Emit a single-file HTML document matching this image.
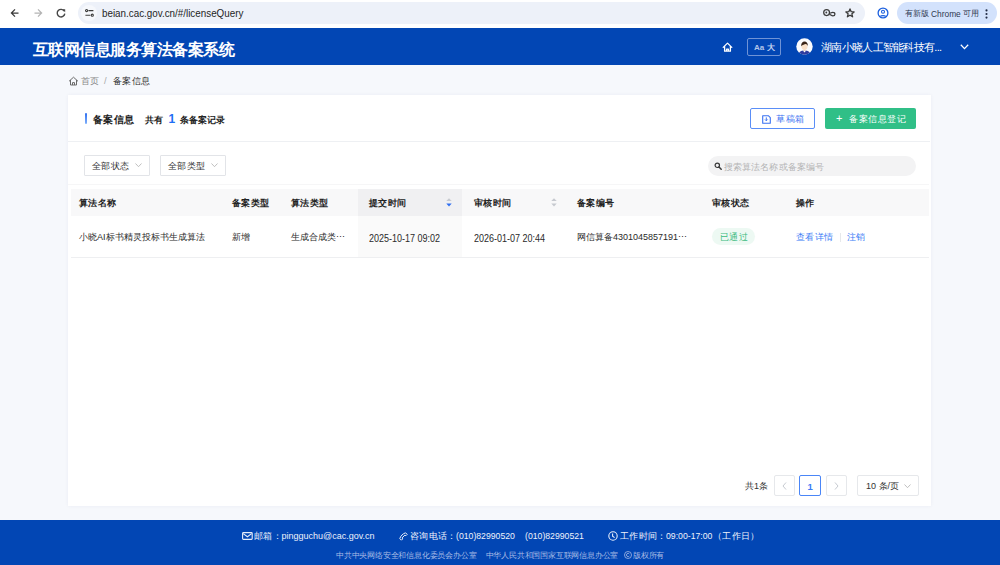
<!DOCTYPE html>
<html><head><meta charset="utf-8">
<style>
*{box-sizing:border-box;margin:0;padding:0}
html,body{width:1000px;height:565px;overflow:hidden;background:#f6f8fc;font-family:"Liberation Sans",sans-serif;color:#333}
.t{position:absolute;white-space:nowrap;line-height:1}
svg{position:absolute;overflow:visible}
.box{position:absolute}
#tb{position:absolute;left:0;top:0;width:1000px;height:28px;background:#fff}
#omni{position:absolute;left:78px;top:2px;width:787px;height:22px;border-radius:11px;background:#edf1f9}
#upd{position:absolute;left:897px;top:2px;width:100px;height:22px;border-radius:11px;background:#d3e2fc}
#hd{position:absolute;left:0;top:28px;width:1000px;height:37px;background:#0246b4}
#card{position:absolute;left:68px;top:95px;width:863px;height:411px;background:#fff;box-shadow:0 0 4px rgba(20,40,90,0.05)}
#ft{position:absolute;left:0;top:520px;width:1000px;height:45px;background:#0246b4}
.th{font-size:9px;letter-spacing:0.3px;font-weight:bold;color:#222}
.f1{top:12px;font-size:9px;letter-spacing:0.3px;color:#f0f4fc;font-weight:500}
.f1l{top:12px;font-size:9px;color:#eef2fb}
.f2{top:32px;font-size:8px;letter-spacing:-0.2px;color:#a9bde6}
.td{font-size:9px;color:#2a2a2a;font-weight:500}
</style></head><body>
<div id="tb">
  <!-- back -->
  <svg width="10" height="10" style="left:10px;top:8px" viewBox="0 0 10 10"><path d="M8.5 5H2M5 1.4L1.4 5L5 8.6" fill="none" stroke="#3a3a3a" stroke-width="1.25"/></svg>
  <!-- forward -->
  <svg width="10" height="10" style="left:33px;top:8px" viewBox="0 0 10 10"><path d="M1.5 5H8M5 1.4L8.6 5L5 8.6" fill="none" stroke="#b4b4b4" stroke-width="1.25"/></svg>
  <!-- reload -->
  <svg width="10" height="10" style="left:56px;top:8px" viewBox="0 0 10 10"><path d="M8.3 3.2A3.8 3.8 0 1 0 8.8 5.6" fill="none" stroke="#474747" stroke-width="1.4"/><path d="M6.2 1.2L9.2 1.2L9.2 4.2Z" fill="#474747"/></svg>
  <div id="omni"></div>
  <div class="box" style="left:81px;top:5px;width:16px;height:16px;border-radius:8px;background:#f6f8fc"></div>
  <svg width="9" height="8" style="left:85px;top:9px" viewBox="0 0 9 8"><circle cx="1.6" cy="1.6" r="1.05" fill="none" stroke="#3c3c3c" stroke-width="1.1"/><path d="M3.4 1.6H8.4M0.4 6.2H5.4" stroke="#3c3c3c" stroke-width="1.1"/><circle cx="7.3" cy="6.2" r="1.05" fill="none" stroke="#3c3c3c" stroke-width="1.1"/></svg>
  <div class="t" style="left:102px;top:8px;font-size:11.5px;color:#1f1f1f;transform:scaleX(0.855);transform-origin:0 0">beian.cac.gov.cn/#/licenseQuery</div>
  <!-- key -->
  <svg width="13" height="8" style="left:823px;top:9px" viewBox="0 0 13 8"><circle cx="3.6" cy="3.6" r="2.9" fill="none" stroke="#3c3c3c" stroke-width="1.25"/><circle cx="3.3" cy="3.5" r="0.9" fill="#3c3c3c"/><path d="M6.4 4.4C7.4 4.2 8.4 3.4 9.8 3.4C11 3.4 11.9 4.3 11.9 5.2C11.9 6.2 11 6.8 9.9 6.8C8.6 6.8 7.6 5.6 6.4 5.3" fill="none" stroke="#3c3c3c" stroke-width="1.25"/></svg>
  <!-- star -->
  <svg width="10" height="10" style="left:845.3px;top:8.3px" viewBox="0 0 10 10"><path d="M5 0.9L6.2 3.7L9.1 3.9L6.9 5.8L7.6 8.8L5 7.2L2.4 8.8L3.1 5.8L0.9 3.9L3.8 3.7Z" fill="none" stroke="#3a3a3a" stroke-width="1.3" stroke-linejoin="round"/></svg>
  <!-- profile -->
  <svg width="12" height="12" style="left:877px;top:7px" viewBox="0 0 12 12"><circle cx="6" cy="6" r="4.9" fill="none" stroke="#1b5fde" stroke-width="1.3"/><circle cx="6" cy="4.8" r="1.5" fill="none" stroke="#1b5fde" stroke-width="1.1"/><path d="M3.3 9.4C4.2 8.3 7.8 8.3 8.7 9.4" fill="none" stroke="#1b5fde" stroke-width="1.2"/></svg>
  <div id="upd"></div>
  <div class="t" style="left:904.5px;top:9.5px;font-size:8px;font-weight:500;color:#2e3850">有新版</div><div class="t" style="left:930.5px;top:9.5px;font-size:8.5px;color:#2e3850;font-weight:normal;transform:scaleX(0.985);transform-origin:0 0">Chrome</div><div class="t" style="left:962.5px;top:9.5px;font-size:8px;font-weight:500;color:#2e3850">可用</div>
  <svg width="3" height="10" style="left:985px;top:8.5px" viewBox="0 0 3 10"><circle cx="1.5" cy="1.4" r="1.05" fill="#1f2a44"/><circle cx="1.5" cy="5" r="1.05" fill="#1f2a44"/><circle cx="1.5" cy="8.6" r="1.05" fill="#1f2a44"/></svg>
</div>
<div id="hd">
  <div class="t" style="left:32.5px;top:13.5px;font-size:16px;letter-spacing:-0.5px;font-weight:bold;color:#fff">互联网信息服务算法备案系统</div>
  <!-- home -->
  <svg width="11" height="10" style="left:722px;top:14px" viewBox="0 0 11 10"><path d="M1.2 5.4L5.5 1.1L9.8 5.4M2.6 4.2V9.2H8.4V4.2M4.6 9.2V7.2H6.4V9.2" fill="none" stroke="#fff" stroke-width="1.3" stroke-linejoin="round" stroke-linecap="round"/></svg>
  <div class="box" style="left:747px;top:10px;width:34px;height:18px;border:1px solid #6f93d6;border-radius:2px"></div>
  <div class="t" style="left:754px;top:16px;font-size:8px;font-weight:bold;color:#b3c5ea">Aa</div>
  <div class="t" style="left:767px;top:15.5px;font-size:8px;font-weight:bold;color:#c9d6f2">大</div>
  <!-- avatar -->
  <svg width="17" height="17" style="left:796px;top:10px" viewBox="0 0 17 17"><defs><clipPath id="cc"><circle cx="8.5" cy="8.5" r="8.2"/></clipPath></defs><circle cx="8.5" cy="8.5" r="8.2" fill="#fbfbfd"/><g clip-path="url(#cc)"><path d="M2.5 17C3 13.5 5 12.5 8.5 12.5C12 12.5 14 13.5 14.5 17Z" fill="#2f3c9e"/><path d="M6.8 12.6L8.5 14.6L10.2 12.6Z" fill="#fff"/><rect x="7.6" y="10.8" width="1.8" height="2" fill="#f6d2b4"/><ellipse cx="8.5" cy="8.6" rx="3" ry="3.3" fill="#fbe1c9"/><path d="M5.2 8.2C5 5.2 6.6 3.6 8.5 3.6C10.6 3.6 12 5.2 11.8 8C11.2 6.6 10.6 6 9.6 5.9C8.6 6.4 6.6 6.5 5.2 8.2Z" fill="#3a2418"/></g></svg>
  <div class="t" style="left:821px;top:14px;font-size:11px;letter-spacing:-0.7px;font-weight:500;color:#fff">湖南小晓人工智能科技有...</div>
  <svg width="9" height="6" style="left:960px;top:16px" viewBox="0 0 9 6"><path d="M0.8 0.8L4.5 4.6L8.2 0.8" fill="none" stroke="#fff" stroke-width="1.3"/></svg>
</div>
<!-- breadcrumb -->
<svg width="11" height="10" style="left:68px;top:76px" viewBox="0 0 11 10"><path d="M1 5.3L5.5 1.2L10 5.3M2.5 4V9H8.5V4M4.5 9V6.6H6.5V9" fill="none" stroke="#6a6a6a" stroke-width="1" stroke-linejoin="miter"/></svg>
<div class="t" style="left:81px;top:77px;font-size:9px;letter-spacing:0.3px;color:#888">首页</div>
<div class="t" style="left:104px;top:76px;font-size:9.5px;color:#aaa">/</div>
<div class="t" style="left:113px;top:77px;font-size:9px;letter-spacing:0.3px;font-weight:500;color:#2a2a2a">备案信息</div>

<div id="card">
  <!-- title row -->
  <div class="box" style="left:17px;top:18px;width:2px;height:11px;border-radius:1px;background:linear-gradient(#2f6ff0,#7fb0fb)"></div>
  <div class="t" style="left:25px;top:19.5px;font-size:10px;letter-spacing:0.3px;font-weight:bold;color:#1f1f1f">备案信息</div>
  <div class="t" style="left:77px;top:20.5px;font-size:9px;font-weight:bold;color:#222">共有</div>
  <div class="t" style="left:100.5px;top:17.5px;font-size:12px;font-weight:bold;color:#1f6ff5">1</div>
  <div class="t" style="left:112px;top:20.5px;font-size:9px;font-weight:bold;color:#222">条备案记录</div>
  <!-- draft button -->
  <div class="box" style="left:682px;top:13px;width:65px;height:21px;border:1px solid #5a8ef7;border-radius:2px;background:#fff"></div>
  <svg width="9" height="9" style="left:693.5px;top:19.5px" viewBox="0 0 9 9"><path d="M0.7 0.7H6.3L8.3 2.7V8.3H0.7Z" fill="none" stroke="#3a72f2" stroke-width="1.1" stroke-linejoin="round"/><path d="M4.3 2.4V5.6M3 4.5L4.3 5.8L5.6 4.5" fill="none" stroke="#3a72f2" stroke-width="1"/></svg>
  <div class="t" style="left:708px;top:20px;font-size:9px;letter-spacing:0.7px;font-weight:500;color:#3a70f2">草稿箱</div>
  <!-- register button -->
  <div class="box" style="left:757px;top:13px;width:91px;height:21px;border-radius:2px;background:#30bf87"></div>
  <div class="t" style="left:768px;top:18px;font-size:11px;color:#fff">+</div>
  <div class="t" style="left:781px;top:20px;font-size:9px;letter-spacing:0.5px;font-weight:500;color:#fff">备案信息登记</div>
  <div class="box" style="left:0;top:46px;width:862px;height:1px;background:#eef0f3"></div>
  <!-- filters -->
  <div class="box" style="left:16px;top:60px;width:66px;height:21px;border:1px solid #e2e4e8;border-radius:1px"></div>
  <div class="t" style="left:24px;top:67px;font-size:9px;letter-spacing:0.33px;font-weight:500;color:#333">全部状态</div>
  <svg width="7" height="4" style="left:67px;top:68px" viewBox="0 0 7 4"><path d="M0.5 0.5L3.5 3.7L6.5 0.5" fill="none" stroke="#b8b8b8" stroke-width="0.9"/></svg>
  <div class="box" style="left:92px;top:60px;width:66px;height:21px;border:1px solid #e2e4e8;border-radius:1px"></div>
  <div class="t" style="left:100px;top:67px;font-size:9px;letter-spacing:0.33px;font-weight:500;color:#333">全部类型</div>
  <svg width="7" height="4" style="left:143px;top:68px" viewBox="0 0 7 4"><path d="M0.5 0.5L3.5 3.7L6.5 0.5" fill="none" stroke="#b8b8b8" stroke-width="0.9"/></svg>
  <div class="box" style="left:640px;top:60.5px;width:208px;height:20.5px;border-radius:10px;background:#f3f3f4"></div>
  <svg width="8" height="8" style="left:645.5px;top:67px" viewBox="0 0 8 8"><circle cx="3.3" cy="3.3" r="2.2" fill="none" stroke="#3a3a3a" stroke-width="1.2"/><path d="M5 5L7.2 7.2" stroke="#3a3a3a" stroke-width="1.5" stroke-linecap="round"/></svg>
  <div class="t" style="left:656px;top:67.5px;font-size:9px;letter-spacing:0.1px;color:#b4b4b4">搜索算法名称或备案编号</div>
  <!-- table -->
  <div class="box" style="left:0px;top:89px;width:861px;height:1px;background:#f6f6f7"></div><div class="box" style="left:3px;top:94px;width:858px;height:27px;background:#f8f8f9"></div>
  <div class="box" style="left:290px;top:94px;width:104px;height:27px;background:#f0f0f2"></div>
  <div class="box" style="left:290px;top:121px;width:104px;height:41px;background:#fafafa"></div>
  <div class="box" style="left:3px;top:162px;width:858px;height:1px;background:#eeeff1"></div>
  <div class="t th" style="left:11px;top:104px">算法名称</div>
  <div class="t th" style="left:164px;top:104px">备案类型</div>
  <div class="t th" style="left:223px;top:104px">算法类型</div>
  <div class="t th" style="left:301px;top:104px">提交时间</div>
  <svg width="6" height="9" style="left:378px;top:102.5px" viewBox="0 0 6 9"><path d="M3 0.2L5.7 3.1H0.3Z" fill="#c6c9cf"/><path d="M3 8.4L5.7 5.5H0.3Z" fill="#2f6ff2"/></svg>
  <div class="t th" style="left:406px;top:104px">审核时间</div>
  <svg width="6" height="9" style="left:482.5px;top:102.5px" viewBox="0 0 6 9"><path d="M3 0.2L5.7 3.1H0.3Z" fill="#c6c9cf"/><path d="M3 8.4L5.7 5.5H0.3Z" fill="#c6c9cf"/></svg>
  <div class="t th" style="left:509px;top:104px">备案编号</div>
  <div class="t th" style="left:644px;top:104px">审核状态</div>
  <div class="t th" style="left:728px;top:104px">操作</div>

  <div class="t td" style="left:11px;top:138px">小晓AI标书精灵投标书生成算法</div>
  <div class="t td" style="left:164px;top:138px">新增</div>
  <div class="t td" style="left:223px;top:138px">生成合成类⋯</div>
  <div class="t td" style="left:301px;top:138px;font-size:10.5px;font-weight:normal;transform:scaleX(0.857);transform-origin:0 0">2025-10-17 09:02</div>
  <div class="t td" style="left:406px;top:138px;font-size:10.5px;font-weight:normal;transform:scaleX(0.857);transform-origin:0 0">2026-01-07 20:44</div>
  <div class="t td" style="left:509px;top:138px">网信算备4301045857191⋯</div>
  <div class="box" style="left:644px;top:133px;width:43px;height:17px;border-radius:8.5px;background:#edf9f3"></div>
  <div class="t" style="left:652px;top:138px;font-size:9px;letter-spacing:0.3px;color:#3cbb80">已通过</div>
  <div class="t" style="left:728px;top:138px;font-size:9px;letter-spacing:0.3px;color:#3b7cf6">查看详情</div>
  <div class="box" style="left:772px;top:138px;width:1px;height:9px;background:#e6e8eb"></div>
  <div class="t" style="left:779px;top:138px;font-size:9px;letter-spacing:0.3px;color:#3b7cf6">注销</div>

  <!-- pagination -->
  <div class="t" style="left:677px;top:387px;font-size:9px;color:#333">共1条</div>
  <div class="box" style="left:706px;top:380px;width:21px;height:21px;border:1px solid #e6e8eb;border-radius:2px"></div>
  <svg width="5" height="8" style="left:714px;top:387px" viewBox="0 0 5 8"><path d="M4 0.5L1 4L4 7.5" fill="none" stroke="#c0c4cc" stroke-width="0.9"/></svg>
  <div class="box" style="left:731px;top:380px;width:22px;height:21px;border:1px solid #4a86f7;border-radius:2px"></div>
  <div class="t" style="left:739.5px;top:386.5px;font-size:9.5px;font-weight:bold;color:#3b7cf6">1</div>
  <div class="box" style="left:758px;top:380px;width:21px;height:21px;border:1px solid #e6e8eb;border-radius:2px"></div>
  <svg width="5" height="8" style="left:766px;top:387px" viewBox="0 0 5 8"><path d="M1 0.5L4 4L1 7.5" fill="none" stroke="#c0c4cc" stroke-width="0.9"/></svg>
  <div class="box" style="left:789px;top:380px;width:62px;height:21px;border:1px solid #e6e8eb;border-radius:2px"></div>
  <div class="t" style="left:798px;top:387px;font-size:9px;color:#333">10 条/页</div>
  <svg width="7" height="4" style="left:835.5px;top:389px" viewBox="0 0 7 4"><path d="M0.5 0.5L3.5 3.7L6.5 0.5" fill="none" stroke="#b8b8b8" stroke-width="0.9"/></svg>
</div>

<div id="ft">
  <svg width="11" height="8" style="left:242px;top:12px" viewBox="0 0 11 8"><rect x="0.6" y="0.6" width="9.6" height="6.8" rx="0.8" fill="none" stroke="#e8eefa" stroke-width="1.1"/><path d="M1.2 1.6L5.4 4.8L9.6 1.6" fill="none" stroke="#e8eefa" stroke-width="1.1"/></svg>
  <div class="t f1" style="left:254px">邮箱：</div>
  <div class="t f1l" style="left:281.5px">pingguchu@cac.gov.cn</div>
  <svg width="9" height="9" style="left:399px;top:12px" viewBox="0 0 9 9"><path d="M6.6 0.8L8.2 2.4L6.9 3.7L5.9 3.1L3.1 5.9L3.7 6.9L2.4 8.2L0.8 6.6C1.6 3.9 3.9 1.6 6.6 0.8Z" fill="none" stroke="#e8eefa" stroke-width="1" stroke-linejoin="round"/></svg>
  <div class="t f1" style="left:410px">咨询电话：</div>
  <div class="t f1l" style="left:456px;transform:scaleX(0.965);transform-origin:0 0">(010)82990520</div>
  <div class="t f1l" style="left:525px;transform:scaleX(0.965);transform-origin:0 0">(010)82990521</div>
  <svg width="10" height="10" style="left:608px;top:11px" viewBox="0 0 10 10"><circle cx="5" cy="5" r="4.2" fill="none" stroke="#e8eefa" stroke-width="1.1"/><path d="M4.6 2.6V5.2L6.6 6.6" fill="none" stroke="#e8eefa" stroke-width="1.1"/></svg>
  <div class="t f1" style="left:620px">工作时间：</div>
  <div class="t f1l" style="left:665.5px;transform:scaleX(0.966);transform-origin:0 0">09:00-17:00</div>
  <div class="t f1" style="left:713px">（工作日）</div>
  <div class="t f2" style="left:336px">中共中央网络安全和信息化委员会办公室</div>
  <div class="t f2" style="left:485.5px">中华人民共和国国家互联网信息办公室</div>
  <svg width="8" height="8" style="left:624px;top:31px" viewBox="0 0 8 8"><circle cx="4" cy="4" r="3.5" fill="none" stroke="#a9bde6" stroke-width="0.8"/><path d="M5.3 3A1.6 1.6 0 1 0 5.3 5" fill="none" stroke="#a9bde6" stroke-width="0.8"/></svg><div class="t f2" style="left:633px">版权所有</div>
</div>
</body></html>
